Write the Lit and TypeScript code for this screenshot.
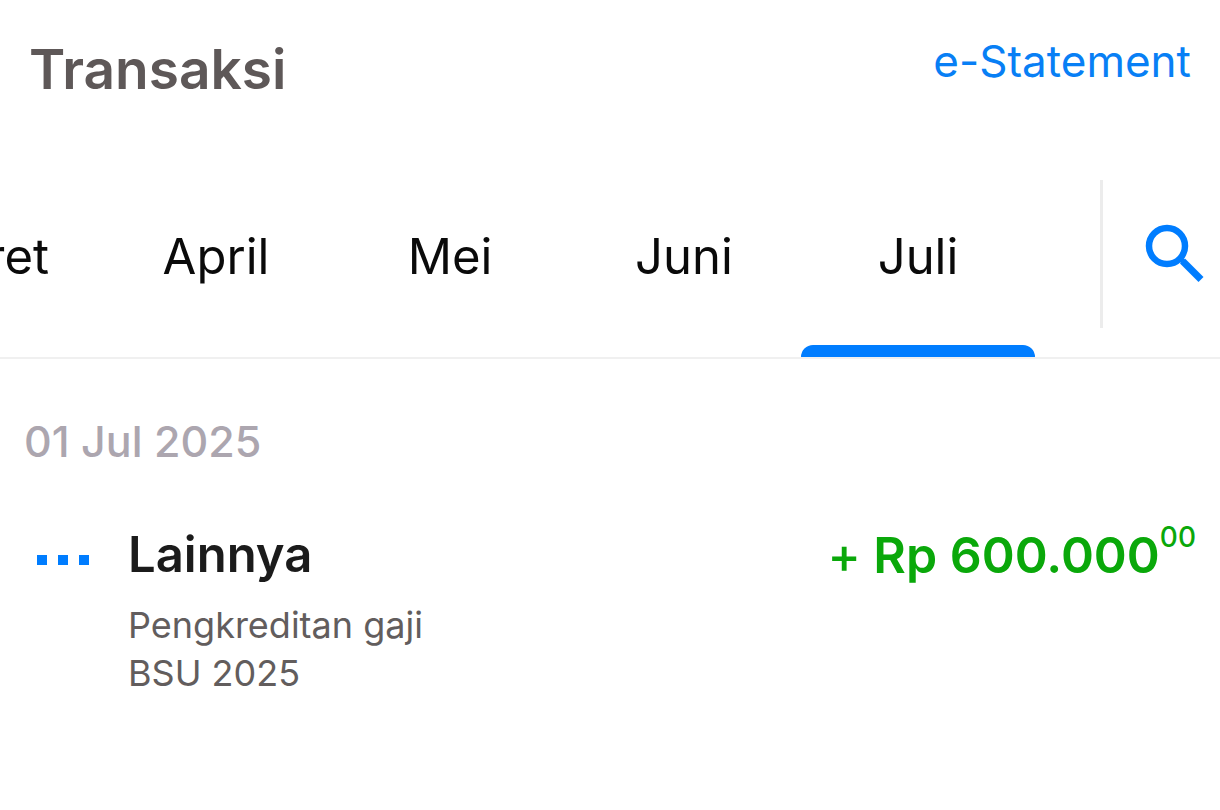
import { LitElement, html, css } from "lit";
import { customElement, state } from "lit/decorators.js";

interface Month { id: string; label: string; }

@customElement("app-root")
export class AppRoot extends LitElement {
  @state() private active = "jul";

  private months: Month[] = [
    { id: "mar", label: "Maret" },
    { id: "apr", label: "April" },
    { id: "mei", label: "Mei" },
    { id: "jun", label: "Juni" },
    { id: "jul", label: "Juli" },
  ];

  static styles = css`
    :host { display: block; min-height: 100vh; background: #fff; color: #1b1b1b; font-family: Inter, "Liberation Sans", sans-serif; font-variant-ligatures: no-contextual; overflow-x: hidden; }
    * { box-sizing: border-box; }
    button { font: inherit; font-variant-ligatures: inherit; border: 0; background: none; padding: 0; cursor: pointer; }
    .header { display: flex; justify-content: space-between; align-items: flex-start; padding: 39px 29px 81px; }
    h1 { margin: 0; font-size: 55px; line-height: 60px; font-weight: 600; color: #5e5858; }
    .statement { font-size: 44px; line-height: 44px; color: #087ff5; text-decoration: none; }
    .bar { display: flex; align-items: flex-start; border-bottom: 2px solid #f0f0f0; }
    .months { flex: 1; min-width: 0; display: flex; justify-content: flex-end; overflow: hidden; padding-right: 65px; }
    .month { flex: 0 0 234px; font-size: 49px; line-height: 60px; color: #0a0a0a; display: flex; flex-direction: column; }
    .label { width: 100%; padding: 47px 0 58px; text-align: center; }
    .marker { height: 12px; width: 100%; border-radius: 12px 12px 0 0; }
    .on .marker { background: #007dff; }
    .search { flex: 0 0 120px; height: 148px; border-left: 3px solid #ececec; display: flex; align-items: center; justify-content: flex-end; padding-right: 16px; color: #007dff; }
    .list { padding: 50px 24px 0; }
    h2 { margin: 0; font-size: 43px; line-height: 64px; font-weight: 500; color: #aca6af; }
    .row { display: flex; align-items: flex-start; padding-top: 50px; }
    .icon { flex: none; width: 56px; height: 64px; margin: 0 36px 0 12px; fill: #007dff; }
    .detail { flex: 1; min-width: 0; }
    h3 { margin: 0; font-size: 49px; line-height: 64px; font-weight: 600; }
    .note { margin: 14px 0 0; font-size: 36px; line-height: 48px; color: #625d5d; max-width: 340px; }
    .amount { font-size: 50px; line-height: 64px; font-weight: 600; color: #0aa80a; white-space: nowrap; }
    .sign { font-weight: 500; }
    sup { font-size: 28px; line-height: 0; font-weight: 500; vertical-align: 26px; }
  `;

  render() {
    return html`
      <header class="header"><h1>Transaksi</h1><a class="statement" href="#">e-Statement</a></header>
      <nav class="bar">
        <div class="months">
          ${this.months.map((m) => html`<button class="month ${m.id === this.active ? "on" : ""}" @click=${() => (this.active = m.id)}>
            <span class="label">${m.label}</span><span class="marker"></span></button>`)}
        </div>
        <button class="search" aria-label="Cari">
          <svg width="60" height="60" viewBox="0 0 60 60" fill="none" stroke="currentColor">
            <circle cx="23" cy="22" r="18" stroke-width="6.5"/>
            <path d="M36 34.5 39 37.5" stroke-width="5"/>
            <path d="M38.5 37 57 55.5" stroke-width="7"/>
          </svg>
        </button>
      </nav>
      <main class="list">
        <h2>01 Jul 2025</h2>
        <article class="row">
          <svg class="icon" viewBox="0 0 56 64" aria-hidden="true">
            <rect x="1" y="32" width="10" height="10"/><rect x="22" y="32" width="10" height="10"/><rect x="43" y="32" width="10" height="10"/>
          </svg>
          <div class="detail"><h3>Lainnya</h3><p class="note">Pengkreditan gaji BSU 2025</p></div>
          <div class="amount"><span class="sign">+</span> Rp 600.000<sup>00</sup></div>
        </article>
      </main>`;
  }
}
